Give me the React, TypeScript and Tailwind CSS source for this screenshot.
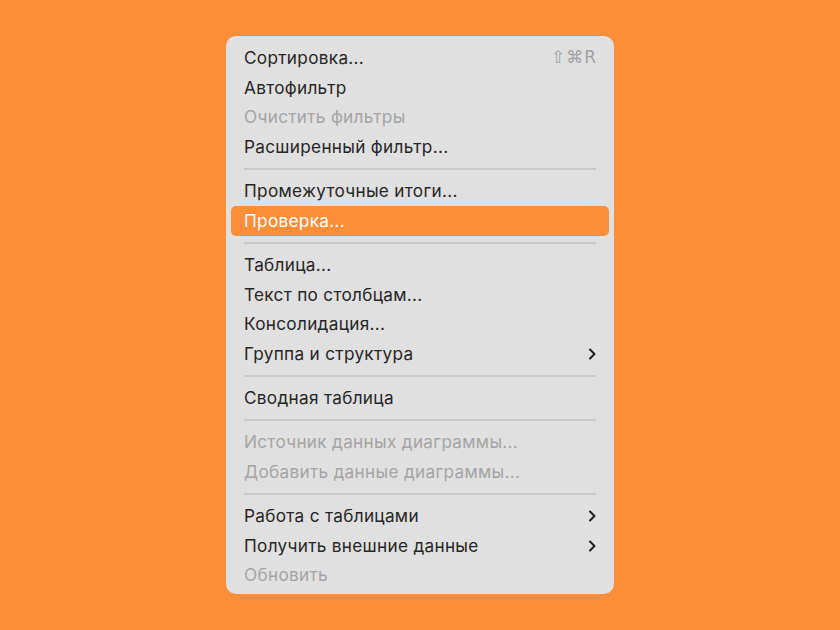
import type { ReactNode } from "react";

type Item = {
  label: string;
  disabled?: boolean;
  active?: boolean;
  shortcut?: string;
  submenu?: boolean;
};

const groups: Item[][] = [
  [
    { label: "Сортировка...", shortcut: "⇧⌘R" },
    { label: "Автофильтр" },
    { label: "Очистить фильтры", disabled: true },
    { label: "Расширенный фильтр..." },
  ],
  [{ label: "Промежуточные итоги..." }, { label: "Проверка...", active: true }],
  [
    { label: "Таблица..." },
    { label: "Текст по столбцам..." },
    { label: "Консолидация..." },
    { label: "Группа и структура", submenu: true },
  ],
  [{ label: "Сводная таблица" }],
  [
    { label: "Источник данных диаграммы...", disabled: true },
    { label: "Добавить данные диаграммы...", disabled: true },
  ],
  [
    { label: "Работа с таблицами", submenu: true },
    { label: "Получить внешние данные", submenu: true },
    { label: "Обновить", disabled: true },
  ],
];

const Chevron = () => (
  <svg width="10" height="14" viewBox="0 0 10 14" fill="none" className="shrink-0">
    <path d="M3 2.5 L7.5 7 L3 11.5" stroke="#1f1f1f" strokeWidth="2" strokeLinecap="round" strokeLinejoin="round" />
  </svg>
);

const Row = ({ item }: { item: Item }) => {
  const color = item.active
    ? "bg-[#fc8e3a] text-white"
    : item.disabled
      ? "text-[#a5a5a5]"
      : "text-[#262626]";

  return (
    <div className="h-[29.75px] px-[5px] flex items-center">
      <div className={`w-full h-[30px] rounded-[5px] pl-[13px] pr-[12px] flex items-center justify-between ${color}`}>
        <span className="text-[17.2px] tracking-[0.3px]">{item.label}</span>
        {item.shortcut && (
          <span className="text-[17px] text-[#a0a0a0] font-['DejaVu_Sans',sans-serif] tracking-[1px]">
            {item.shortcut}
          </span>
        )}
        {item.submenu && <Chevron />}
      </div>
    </div>
  );
};

const Separator = () => (
  <div className="h-[14.25px] px-[18px] flex items-center">
    <div className="w-full h-[2px] bg-[#cacaca]" />
  </div>
);

const Menu = ({ children }: { children: ReactNode }) => (
  <div className="w-[388px] h-[558px] rounded-[10px] bg-[#e0e0e0] pt-[7px] flex flex-col">
    {children}
  </div>
);

export default function App() {
  return (
    <div className="w-[840px] h-[630px] bg-[#fc8e3a] flex items-center justify-center font-['Inter',sans-serif]">
      <Menu>
        {groups.map((group, gi) => (
          <div key={gi} className="flex flex-col">
            {gi > 0 && <Separator />}
            {group.map((item) => (
              <Row key={item.label} item={item} />
            ))}
          </div>
        ))}
      </Menu>
    </div>
  );
}
